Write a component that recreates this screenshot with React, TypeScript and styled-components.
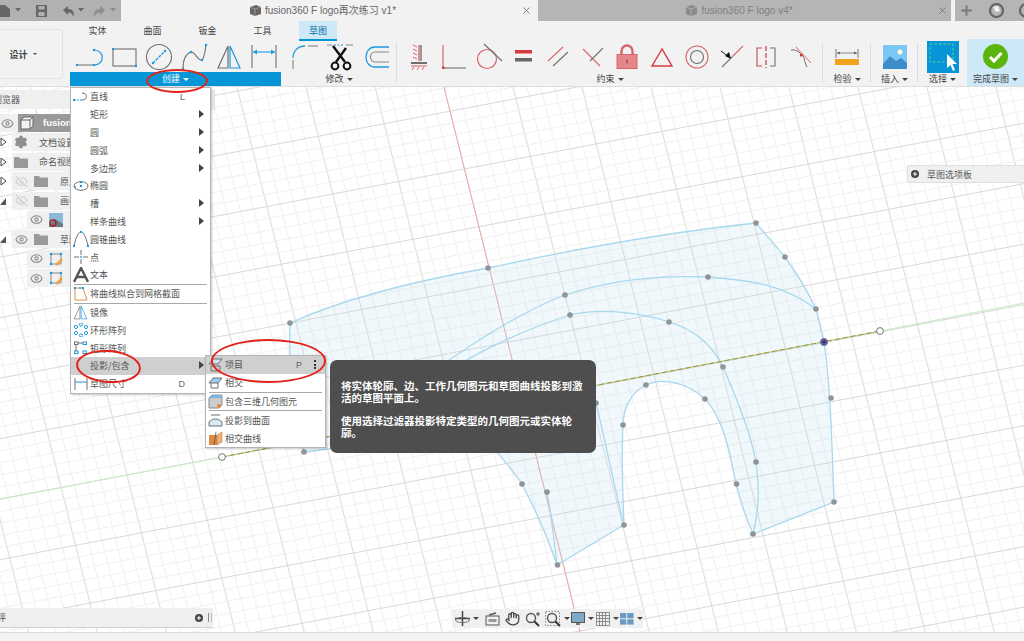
import React from "react";
import styled, { createGlobalStyle } from "styled-components";
import { Eye, EyeOff, Settings, Hand, Plus, X } from "lucide-react";

const Global = createGlobalStyle`
  html, body { margin: 0; padding: 0; background: #fff; }
  body { font-family: "Noto Sans CJK SC", "Liberation Sans", sans-serif; }
`;

const Page = styled.div`position: relative; width: 1024px; height: 641px; overflow: hidden; display: flex; flex-direction: column; background: #fff;`;

/* ---------- title bar ---------- */
const TitleBar = styled.div`height: 21px; flex: none; display: flex; background: #f2f2f2;`;
const QuickBar = styled.div`width: 121px; flex: none; background: #b1b1b1; display: flex; align-items: center; overflow: hidden;`;
const Tab = styled.div<{ $active?: boolean; $w: number }>`
  width: ${p => p.$w}px; flex: none; position: relative; display: flex; align-items: center; justify-content: center; gap: 3px;
  box-sizing: border-box; padding-right: 11px;
  background: ${p => (p.$active ? "#f2f2f2" : "#b5b5b5")};
  color: ${p => (p.$active ? "#666" : "#808080")};
  font: 10px/21px "Liberation Sans", "Noto Sans CJK SC", sans-serif;
  margin-right: ${p => (p.$active ? 3 : 0)}px;
`;
const TabClose = styled.span`position: absolute; right: 3px; top: 5px; color: #777; display: flex;`;
const WindowTools = styled.div`flex: 1; margin-left: 4px; background: #b5b5b5; display: flex; align-items: center; padding-left: 4px; gap: 15px; color: #777;`;
const Caret = styled.i<{ $c?: string; $s?: number }>`
  display: inline-block; flex: none; width: 0; height: 0; border-style: solid;
  border-width: ${p => p.$s ?? 3}px ${p => p.$s ?? 3}px 0; border-color: ${p => p.$c ?? "#444"} transparent transparent;
`;

/* ---------- ribbon ---------- */
const Ribbon = styled.div`height: 66px; flex: none; display: flex; background: #f2f2f2; border-bottom: 1px solid #dedede; box-sizing: border-box;`;
const DesignColumn = styled.div`width: 70px; flex: none; padding-top: 8px;`;
const DesignBox = styled.div`width: 63px; height: 50px; box-sizing: border-box; border: 1px solid #e3e3e3; border-left: 0; border-radius: 0 4px 4px 0; display: flex; align-items: center; justify-content: center; gap: 5px; font-size: 9px; font-weight: 700; color: #444; padding-right: 16px;`;
const RibbonMain = styled.div`flex: 1; display: flex; flex-direction: column; min-width: 0;`;
const RibbonTabs = styled.div`height: 20px; flex: none; display: flex; font-size: 9px; color: #444; line-height: 20px;`;
const RibbonTab = styled.div<{ $active?: boolean }>`
  width: ${p => (p.$active ? 38 : 55)}px; text-align: center; box-sizing: border-box;
  ${p => p.$active && "background:#cde8f6; border-bottom:2px solid #0696d7; margin-left:9px; color:#0a6e9f;"}
`;
const Groups = styled.div`flex: 1; display: flex; min-height: 0;`;
const Group = styled.div<{ $w: number; $active?: boolean; $sep?: boolean }>`
  width: ${p => p.$w}px; flex: none; display: flex; flex-direction: column; position: relative;
  ${p => p.$active && "background:#cde8f6; margin-top:-2px; padding-top:2px;"}
  ${p => p.$sep && `&::after{content:"";position:absolute;right:0;top:2px;bottom:4px;width:1px;background:#dcdcdc;}`}
`;
const GroupIcons = styled.div<{ $pad?: number }>`height: 31px; display: flex; padding-left: ${p => p.$pad ?? 0}px; justify-content: ${p => (p.$pad === undefined ? "center" : "flex-start")};`;
const Slot = styled.div<{ $w?: number }>`width: ${p => p.$w ?? 35}px; flex: none; display: flex; align-items: center; justify-content: center;`;
const GroupLabel = styled.div<{ $on?: boolean }>`
  height: 14px; display: flex; align-items: center; justify-content: center; gap: 3px; font-size: 9px; line-height: 14px;
  color: ${p => (p.$on ? "#fff" : "#444")}; background: ${p => (p.$on ? "#0696d7" : "transparent")}; white-space: nowrap;
`;

/* ---------- canvas ---------- */
const Canvas = styled.div`flex: 1; position: relative; overflow: hidden; background: #fff;`;
const Scene = styled.svg`position: absolute; inset: 0; width: 100%; height: 100%; display: block;`;
const StatusBar = styled.div`height: 9px; flex: none; background: #f2f2f2; border-top: 1px solid #dcdcdc; box-sizing: border-box;`;

/* ---------- browser ---------- */
const Browser = styled.div`position: absolute; left: 0; top: 3px; width: 72px; display: flex; flex-direction: column;`;
const BrowserHead = styled.div`height: 19px; background: #efefef; font-size: 9px; line-height: 19px; color: #555; margin-bottom: 5px; white-space: nowrap; direction: rtl; overflow: hidden; padding-right: 52px;`;
const BrowserRow = styled.div<{ $indent?: number }>`height: 18px; margin-bottom: 1.4px; margin-left: ${p => p.$indent ?? 12}px; background: #f0f0f0; display: flex; align-items: center; position: relative; font-size: 9px; color: #555; white-space: nowrap;`;
const Toggle = styled.svg`position: absolute; left: -12px; top: 4px; width: 7px; height: 10px;`;
const RowSlot = styled.div<{ $w?: number }>`width: ${p => p.$w ?? 18}px; flex: none; display: flex; align-items: center; justify-content: center; margin-right: ${p => (p.$w ? 0 : 2)}px; color: #8a8a8a;`;
const RowLabel = styled.span<{ $gap?: number }>`margin-left: ${p => p.$gap ?? 8}px;`;
const RootChip = styled.div`width: 53px; height: 18px; margin-left: 4px; background: #9a9a9a; color: #fff; font: 700 9.5px/18px "Liberation Sans", sans-serif; padding-left: 2px; box-sizing: border-box; overflow: hidden; display: flex; align-items: center; gap: 9px; svg{flex:none;}`;

/* ---------- menus ---------- */
const Menu = styled.div<{ $l: number; $t: number; $w: number }>`
  position: absolute; left: ${p => p.$l}px; top: ${p => p.$t}px; width: ${p => p.$w}px; box-sizing: border-box; background: #fff;
  border: 1px solid #b5b5b5; box-shadow: 1px 1px 2px rgba(0,0,0,.22); z-index: 3; font-size: 9px; color: #555;
`;
const MenuRow = styled.div<{ $hl?: boolean }>`
  height: 17.8px; display: flex; align-items: center; position: relative; white-space: nowrap; background: ${p => (p.$hl ? "#cfcfcf" : "transparent")};
`;
const MenuIcon = styled.div`width: 19px; flex: none; display: flex; align-items: center; justify-content: center;`;
const Shortcut = styled.span<{ $r: number }>`position: absolute; right: ${p => p.$r}px; font: 9px "Liberation Sans", sans-serif; color: #666;`;
const SubArrow = styled.i`position: absolute; right: 6px; top: 4.5px; width: 0; height: 0; border-style: solid; border-width: 4px 0 4px 5px; border-color: transparent transparent transparent #444;`;
const MenuRule = styled.div`height: 1px; background: #a9a9a9; margin: 0 3px; `;
const MenuGrip = styled.div`position: absolute; left: 211px; top: 3px; width: 3px; height: 20px; background: #eee; border-right: 1px solid #ddd; z-index: 2;`;
const Kebab = styled.span`position: absolute; right: 9px; top: 4px; display: flex; flex-direction: column; gap: 1.5px; i{display:block;width:2px;height:2px;background:#333;}`;
const Tip = styled.div`
  position: absolute; left: 330px; top: 273px; width: 266px; height: 93px; box-sizing: border-box; padding: 20px 10px 0 11px; border-radius: 7px; background: #4e4e4e; color: #fff;
  font-size: 10.5px; font-weight: 700; line-height: 11.5px; z-index: 3;
`;
const TipPara = styled.p`margin: 0 0 12px;`;
const Palette = styled.div`position: absolute; left: 907px; top: 78px; width: 117px; height: 18px; background: #f0f0f0; border: 1px solid #e0e0e0; border-right: 0; display: flex; align-items: center; gap: 8px; padding-left: 3px; box-sizing: border-box; font-size: 9px; color: #555;`;
const RoundPlus = styled.span`width: 8px; height: 8px; border-radius: 50%; background: #444; color: #fff; display: flex; align-items: center; justify-content: center;`;
const Comments = styled.div`position: absolute; left: 0; top: 521px; width: 213px; height: 20px; background: #efefef; border-bottom: 1px solid #d2d2d2; box-sizing: border-box; display: flex; align-items: center; font-size: 9px; color: #555;`;
const CommentsText = styled.span`flex: 1; margin-left: -3px;`;
const Grip = styled.span`width: 2px; height: 9px; margin: 0 1px 0 5px; border-left: 1px solid #888; border-right: 1px solid #bbb;`;
const NavBar = styled.div`position: absolute; left: 452px; top: 522px; height: 19px; width: 191px; background: #f0f0f0; display: flex; align-items: center; padding-left: 0;`;
const NavItem = styled.div<{ $w: number }>`width: ${p => p.$w}px; flex: none; display: flex; align-items: center; justify-content: center; gap: 3px;`;
const RedEllipse = styled.div<{ $l: number; $t: number; $w: number; $h: number; $r?: number }>`
  position: absolute; left: ${p => p.$l}px; top: ${p => p.$t}px; width: ${p => p.$w}px; height: ${p => p.$h}px; box-sizing: border-box;
  border: 2px solid #e2231a; border-radius: 50%; transform: rotate(${p => p.$r ?? 0}deg); z-index: 5; pointer-events: none;
`;

/* ---------- icon helpers ---------- */
const B = "#1c9ade", G = "#6f6f6f", R = "#d8656b";
const Ico: React.FC<{ w: number; h?: number; children: React.ReactNode }> = ({ w, h, children }) => (
  <svg width={w} height={h ?? w} viewBox={`0 0 ${w} ${h ?? w}`} fill="none">{children}</svg>
);
const Dot: React.FC<{ x: number; y: number; s?: number }> = ({ x, y, s = 2.2 }) => <rect x={x - s / 2} y={y - s / 2} width={s} height={s} fill={B} />;

const LineIcon = () => <Ico w={30} h={24}><path d="M3 20H20" stroke={G} strokeWidth="1" /><path d="M20 20C31 20 31 5 20 5" stroke={B} strokeWidth="1.2" /><Dot x={3} y={20} /><Dot x={20} y={20} /><Dot x={20} y={5} /></Ico>;
const RectIcon = () => <Ico w={28} h={22}><rect x="3" y="3" width="23" height="17" stroke={G} strokeWidth="1.1" /><Dot x={3} y={3} /><Dot x={26} y={20} /></Ico>;
const CircleIcon = () => <Ico w={28}><circle cx="14" cy="14" r="12.5" stroke={G} strokeWidth="1.1" /><path d="M8 20L20 8" stroke={B} strokeWidth="1.4" strokeDasharray="3 1" /><Dot x={8} y={20} /><Dot x={20} y={8} /></Ico>;
const SplineIcon = () => <Ico w={28}><path d="M3 26C3 14 8 10 11 9C16 9 17 18 22 17C25 14 25 7 26 2" stroke={G} strokeWidth="1.1" /><Dot x={3} y={26} /><Dot x={11} y={9} /><Dot x={22} y={17} /><Dot x={26} y={2} /></Ico>;
const MirrorIcon = (p: { s?: number }) => { const s = p.s ?? 1; return <Ico w={26 * s} h={26 * s}><g transform={`scale(${s})`}><path d="M12 2L2 24H12Z" stroke={G} strokeWidth="1.2" /><path d="M14 2L24 24H14Z" stroke={B} strokeWidth="1.2" /></g></Ico>; };
const DimIcon = () => <Ico w={28} h={25}><path d="M2 1V24M26 1V24" stroke={G} strokeWidth="1.1" /><path d="M3 8H25" stroke={B} strokeWidth="1.1" /><path d="M3 8L7 5.5V10.5ZM25 8L21 5.5V10.5Z" fill={B} /></Ico>;
const FilletIcon = () => <Ico w={28} h={26}><path d="M2 25V16" stroke="#999" strokeWidth="1.4" /><path d="M2 14C2 7 7 2 14 2" stroke={B} strokeWidth="1.3" /><path d="M17 2H27" stroke="#999" strokeWidth="1.4" /></Ico>;
const ScissorsIcon = () => <Ico w={28} h={28}><path d="M1 2H6M20 2H27" stroke="#888" /><path d="M8 2H18" stroke={B} strokeDasharray="2 1.5" /><path d="M7 3L19 19M20 5L10 19" stroke="#111" strokeWidth="2.4" /><circle cx="9" cy="23" r="3.4" stroke="#111" strokeWidth="2" /><circle cx="21" cy="23" r="3.4" stroke="#111" strokeWidth="2" /></Ico>;
const OffsetIcon = () => <Ico w={28} h={24}><path d="M27 2H13C1 2 1 22 13 22H27" stroke={B} strokeWidth="1.3" /><path d="M27 7H13C7 7 7 17 13 17H27" stroke="#888" strokeWidth="1.2" /></Ico>;
const FixIcon = () => <Ico w={18} h={26}><path d="M11 1V17" stroke={G} strokeWidth="1.4" /><path d="M9 1V17" stroke={R} strokeWidth="1.4" /><path d="M7 3L3 1M7 7L3 5M7 11L3 9M7 15L3 13" stroke={R} /><path d="M1 19H17" stroke={G} strokeWidth="2" /><path d="M1 22H17" stroke={R} strokeWidth="1" /><path d="M4 23L2 26M9 23L7 26M14 23L12 26" stroke={R} /></Ico>;
const CoincIcon = () => <Ico w={26} h={26}><path d="M2 1V24" stroke={R} strokeWidth="1.2" /><path d="M3 24H25" stroke={G} strokeWidth="1.1" /><rect x="1" y="22.5" width="2.5" height="2.5" fill="#d23a44" /></Ico>;
const TangentIcon = () => <Ico w={28}><circle cx="12" cy="16" r="9.5" stroke={R} strokeWidth="1.2" /><path d="M9 1L27 18" stroke={G} strokeWidth="1.1" /></Ico>;
const EqualIcon = () => <Ico w={17} h={13}><rect y="0" width="17" height="3.5" fill="#d33a3f" /><rect y="8" width="17" height="3.5" fill="#666" /></Ico>;
const ParallelIcon = () => <Ico w={22}><path d="M1 15L16 1" stroke={R} strokeWidth="1.1" /><path d="M6 20L21 6" stroke={G} strokeWidth="1.1" /></Ico>;
const PerpIcon = () => <Ico w={22}><path d="M1 3L18 20" stroke={R} strokeWidth="1.1" /><path d="M8 15L21 2" stroke={G} strokeWidth="1.1" /></Ico>;
const LockIcon = () => <Ico w={22} h={25}><path d="M5.5 11V7a5.5 5.5 0 0 1 11 0v4" stroke="#d8656b" strokeWidth="2.4" /><rect x="1" y="10.5" width="20" height="14" fill="#e5868a" stroke="#d8656b" /><rect x="10.4" y="15.5" width="1.2" height="4" fill="#a33" /></Ico>;
const TriIcon = () => <Ico w={24} h={20}><path d="M12 2L2 19H22Z" stroke="#d33a44" strokeWidth="1.4" /></Ico>;
const ConcIcon = () => <Ico w={24}><circle cx="12" cy="12" r="11" stroke={R} strokeWidth="1.1" /><circle cx="12" cy="12" r="6.5" stroke={G} strokeWidth="1.1" /></Ico>;
const MidIcon = () => <Ico w={24}><path d="M2 22L12 12" stroke={G} strokeWidth="1.1" /><path d="M12 12L23 1" stroke={R} strokeWidth="1.1" /><path d="M1 6L9 12" stroke="#222" /><path d="M11 14L5 11L9 7Z" fill="#111" /></Ico>;
const SymIcon = () => <Ico w={22} h={22}><path d="M7 2H2V20H7" stroke="#c9474d" strokeWidth="1.1" /><path d="M15 2H20V20H15" stroke={G} strokeWidth="1.1" /><path d="M11 0V22" stroke="#c9474d" strokeWidth="1.3" strokeDasharray="5 2" /></Ico>;
const CurvIcon = () => <Ico w={22} h={22}><path d="M1 4C7 3 12 8 14 12C15 15 15 18 17 21" stroke={G} /><path d="M6 1L21 17" stroke={R} /><rect x="10" y="8" width="2.4" height="2.4" fill="#c33" /></Ico>;
const RulerIcon = () => <Ico w={24} h={18}><path d="M1 1V10M23 1V10" stroke="#777" /><path d="M2 5H22" stroke="#888" /><path d="M2 5L5 3.5V6.5ZM22 5L19 3.5V6.5Z" fill="#666" /><rect y="11" width="24" height="6" fill="#f0a21a" /></Ico>;
const PictureIcon = () => <Ico w={24}><rect width="24" height="24" fill="#7cc6f5" /><circle cx="17" cy="7" r="2.5" fill="#fff7d8" /><path d="M0 19L7 11L13 16L18 13L24 18V24H0Z" fill="#3e8dc9" /></Ico>;
const SelectIcon = () => <Ico w={32}><rect width="32" height="32" fill="#0696d7" /><rect x="3" y="3" width="23" height="18" stroke="#5ad58c" strokeDasharray="2.5 2" /><path d="M20 13V27L23.5 24L26 30L28 29L25.5 23L30 23Z" fill="#fff" /></Ico>;
const FinishIcon = () => <Ico w={25}><circle cx="12.5" cy="12.5" r="12.5" fill="#5cb40f" /><path d="M7 13L11 17L18.5 9" stroke="#fff" strokeWidth="3" /></Ico>;

const Folder = () => <Ico w={14} h={12}><path d="M0 1H5L6 2.5H14V12H0Z" fill="#999" /></Ico>;
const GearIco = () => <Settings size={14} color="#8f8f8f" fill="#8f8f8f" strokeWidth={2} />;
const ImgChip = () => <Ico w={14}><rect width="14" height="14" fill="#8db9d8" /><path d="M0 12L6 6L14 11V14H0Z" fill="#6b7a86" /><circle cx="4" cy="10" r="3" stroke="#a52127" strokeWidth="1.4" /></Ico>;
const SketchChip = () => <Ico w={14}><path d="M2 2H12V12H2Z" stroke="#888" /><Dot x={2} y={2} /><Dot x={12} y={2} /><Dot x={2} y={12} /><path d="M7 13L13 7" stroke="#f0a030" strokeWidth="2.2" /></Ico>;
const BoxChip = () => <Ico w={14}><path d="M1 4L4 1H13V10L10 13H1Z" fill="#f2f2f2" stroke="#666" /><path d="M1 4H10V13M10 4L13 1" stroke="#666" /></Ico>;

const s = { c: "#444" };
const MLine = () => <Ico w={16} h={11}><path d="M1 9H9" stroke={B} strokeDasharray="2 1" /><path d="M9 9C15 9 15 2 9 2" stroke={G} /><Dot x={1} y={9} s={2} /></Ico>;
const MEllipse = () => <Ico w={16} h={10}><ellipse cx="8" cy="5" rx="7" ry="4.3" stroke={G} /><Dot x={8} y={1} s={2} /><Dot x={8} y={5} s={2} /><Dot x={2} y={6} s={1.6} /></Ico>;
const MConic = () => <Ico w={16}><path d="M1 15C3 5 6 1 8 1C10 1 13 5 15 15" stroke={G} /><Dot x={1} y={15} s={2} /><Dot x={8} y={1} s={2} /><Dot x={15} y={15} s={2} /></Ico>;
const MPoint = () => <Ico w={14}><path d="M7 0V5M7 9V14M0 7H5M9 7H14" stroke={G} /><Dot x={7} y={7} s={1.6} /></Ico>;
const MText = () => <Ico w={16}><path d="M1 15L8 1L15 15M4 10H12" stroke="#555" strokeWidth="2.4" /></Ico>;
const MFit = () => <Ico w={14}><path d="M1 1H9L13 13H1Z" stroke="#e09048" /><Dot x={1} y={1} s={2} /><Dot x={6} y={1} s={1.6} /><Dot x={9} y={1} s={2} /></Ico>;
const MRing = () => <Ico w={14}>{[[7, 1.5], [12, 4], [12, 10], [7, 12.5], [2, 10], [2, 4]].map(([x, y], i) => <circle key={i} cx={x} cy={y} r="1.6" fill="#fff" stroke={B} />)}</Ico>;
const MRectPat = () => <Ico w={14}><rect x="0.5" y="1" width="3.5" height="2.5" stroke={G} /><rect x="9" y="1" width="3.5" height="2.5" stroke={B} /><rect x="0.5" y="10" width="3.5" height="2.5" stroke={B} /><rect x="9" y="10" width="3.5" height="2.5" stroke={B} /><path d="M2 4V10M4 2H9" stroke={G} /></Ico>;
const MDim = () => <Ico w={14} h={12}><path d="M1 0V12M13 0V12" stroke={G} /><path d="M1 4H13" stroke={B} /></Ico>;
const SProject = () => <Ico w={15} h={14}><path d="M5 1H14L10 6H1Z" fill="#cfe5f3" stroke={G} /><path d="M3 8H12V13H3Z" stroke={G} /><path d="M5 8V6" stroke={B} /></Ico>;
const SInter = () => <Ico w={15} h={12}><path d="M5 1H14L10 6H1Z" fill="#9ed0ee" stroke={G} /><path d="M3 6V11H10V6" stroke={G} /></Ico>;
const SInclude = () => <Ico w={15}><path d="M1 4L4 1H14V11L11 14H1Z" fill="#ccc" stroke="#888" /><path d="M4 1H14V4H1Z" fill="#78b7de" /><circle cx="11" cy="12" r="2" fill="#e8873a" /></Ico>;
const SSurf = () => <Ico w={15} h={13}><path d="M3 1H12" stroke={G} /><path d="M1 8C5 4 10 4 14 8V12H1Z" fill="#d6e9f5" stroke={G} /></Ico>;
const SCurve = () => <Ico w={15}><path d="M1 4H9V14H1Z" fill="#e08a45" /><path d="M9 4L14 1V11L9 14Z" fill="#efb27c" stroke="#b56a2a" strokeWidth=".5" /><path d="M8 1L6 14" stroke="#333" strokeWidth=".6" /></Ico>;

/* ---------- canvas drawing ---------- */
const gridB = () => {
  const out: React.ReactElement[] = [];
  for (let i = -50; i < 60; i++) {
    const top = 444 + i * 13.8;
    out.push(<line key={`b${i}`} x1={top} y1={87} x2={top + 0.25 * 545} y2={632} stroke={i % 5 === 0 ? "#d9d9d9" : "#f0f0f0"} strokeWidth="1" />);
  }
  return out;
};
const gridA = () => {
  const out: React.ReactElement[] = [];
  for (let i = -40; i < 30; i++) {
    const y0 = 499.2 + i * 12.1;
    out.push(<line key={`a${i}`} x1={0} y1={y0} x2={1024} y2={y0 - 0.19 * 1024} stroke={i % 5 === 0 ? "#d9d9d9" : "#f0f0f0"} strokeWidth="1" />);
  }
  return out;
};
const nodes = [[756, 223], [785, 257], [816, 309], [831, 398], [834, 502], [753, 534], [736.5, 484], [756, 462], [705, 399], [723, 367], [669, 322], [570, 315], [565, 295], [708, 277], [488, 268], [290, 323], [646, 385], [623, 425], [624, 525], [557.5, 565], [547, 492], [522, 484], [596, 403], [304, 452]];
const outline = "M290 323C350 296 420 280 488 268C580 248 670 232 756 223L785 257Q805 285 816 309L824 342C830 380 832 440 834 502L753 534C745 515 740 500 736 484C728 440 720 415 705 399C690 385 665 376 646 385C630 393 623 410 623 425C621 460 623 500 624 525L557 565C545 530 535 510 522 484C505 460 490 445 480 430L304 452C295 420 288 380 290 323Z";

const SceneArt = () => (
  <Scene viewBox="0 87 1024 545">
    {gridB()}
    {gridA()}
    <line x1={444} y1={87} x2={580} y2={632} stroke="#f5a6a6" strokeWidth="1" />
    <path d={outline} fill="#bcdff2" fillOpacity=".22" stroke="#a9d8ee" strokeWidth="1.3" />
    <g stroke="#a9d8ee" strokeWidth="1.3" fill="none">
      <path d="M816 309C785 285 750 280 708 277C660 275 610 280 565 295C520 312 470 345 420 380" />
      <path d="M723 367C710 340 690 328 669 322C640 312 600 308 570 315C530 328 490 345 450 370" />
      <path d="M723 367C735 395 750 430 756 462C760 490 758 515 753 534" />
      <path d="M596 403C605 440 615 490 624 525" />
      <path d="M547 492C552 520 555 545 557 565" />
    </g>
    <line x1={0} y1={499} x2={222} y2={457} stroke="#c4ecc0" strokeWidth="1" />
    <line x1={880} y1={331} x2={1024} y2={303} stroke="#c4ecc0" strokeWidth="1" />
    <line x1={222} y1={457} x2={880} y2={331} stroke="#9ad17f" strokeWidth="1" />
    <line x1={222} y1={457} x2={880} y2={331} stroke="#b88a3a" strokeWidth="1" strokeDasharray="5 3" />
    {nodes.map(([x, y], i) => <circle key={i} cx={x} cy={y} r="2.8" fill="#8d9599" />)}
    <circle cx={824} cy={342} r="3.6" fill="#5b4ea3" stroke="#7b7b95" />
    <circle cx={824} cy={342} r="1" fill="#222" />
    <circle cx={880} cy={331} r="3.4" fill="#fff" stroke="#777" />
    <circle cx={222} cy={457} r="3.4" fill="#fff" stroke="#777" />
  </Scene>
);

const Row: React.FC<{ icon?: React.ReactNode; label: string; arrow?: boolean; key2?: string; hl?: boolean }> = ({ icon, label, arrow, key2, hl }) => (
  <MenuRow $hl={hl}>
    <MenuIcon>{icon}</MenuIcon>
    <span>{label}</span>
    {key2 && <Shortcut $r={25}>{key2}</Shortcut>}
    {arrow && <SubArrow />}
  </MenuRow>
);

export default function App() {
  return (
    <Page>
      <Global />
      <TitleBar>
        <QuickBar>
          <Ico w={121} h={21}>
            <path d="M-4 5H5L10 9V17H-4Z" fill="#666" />
            <path d="M15 8H21L18 11.5Z" fill="#666" />
            <path d="M36 5H47V17H36Z" fill="#666" /><rect x="38.5" y="6" width="6" height="3.5" fill="#b1b1b1" /><rect x="38.5" y="12" width="6" height="4" fill="#b1b1b1" />
            <path d="M63 10L68 6V9C73 9 74.5 12 73.5 17C72 13.5 71 12.5 68 12.5V15Z" fill="#666" />
            <path d="M78 8H84L81 11.5Z" fill="#666" />
            <path d="M105 10L100 6V9C95 9 93.5 12 94.5 17C96 13.5 97 12.5 100 12.5V15Z" fill="#8d8d8d" />
            <path d="M110 8H116L113 11.5Z" fill="#8d8d8d" />
          </Ico>
        </QuickBar>
        <Tab $active $w={414}>
          <Ico w={13}><path d="M1 3L7 1L12 3V10L6 12L1 10Z" fill="#666" /><path d="M1 3L6 5L12 3M6 5V12" stroke="#aaa" strokeWidth=".7" /></Ico>
          fusion360 F logo再次练习 v1*
          <TabClose><X size={11} strokeWidth={2} /></TabClose>
        </Tab>
        <Tab $w={413}>
          <Ico w={13}><path d="M1 3L7 1L12 3V10L6 12L1 10Z" fill="#8a8a8a" /><path d="M1 3L6 5L12 3M6 5V12" stroke="#bbb" strokeWidth=".7" /></Ico>
          fusion360 F logo v4*
          <TabClose><X size={11} strokeWidth={2} /></TabClose>
        </Tab>
        <WindowTools>
          <Plus size={15} strokeWidth={3} />
          <Ico w={15}><circle cx="7.5" cy="7.5" r="6.5" stroke="#666" strokeWidth="2.2" /><path d="M4 4L9 3L11 8L7 9Z" fill="#f2f2f2" /></Ico>
          <Ico w={15}><circle cx="7.5" cy="7.5" r="6.5" stroke="#666" strokeWidth="2.2" /><path d="M7.5 4V8H11" stroke="#666" strokeWidth="1.4" /></Ico>
        </WindowTools>
      </TitleBar>

      <Ribbon>
        <DesignColumn>
          <DesignBox>设计 <Caret $s={2.5} /></DesignBox>
        </DesignColumn>
        <RibbonMain>
          <RibbonTabs>
            <RibbonTab>实体</RibbonTab>
            <RibbonTab>曲面</RibbonTab>
            <RibbonTab>钣金</RibbonTab>
            <RibbonTab>工具</RibbonTab>
            <RibbonTab $active>草图</RibbonTab>
          </RibbonTabs>
          <Groups>
            <Group $w={211}>
              <GroupIcons $pad={1}>
                <Slot><LineIcon /></Slot><Slot><RectIcon /></Slot><Slot><CircleIcon /></Slot><Slot><SplineIcon /></Slot><Slot><MirrorIcon /></Slot><Slot><DimIcon /></Slot>
              </GroupIcons>
              <GroupLabel $on>创建 <Caret $c="#fff" /></GroupLabel>
            </Group>
            <Group $w={116} $sep>
              <GroupIcons $pad={6}>
                <Slot $w={35.5}><FilletIcon /></Slot><Slot $w={35.5}><ScissorsIcon /></Slot><Slot $w={35.5}><OffsetIcon /></Slot>
              </GroupIcons>
              <GroupLabel>修改 <Caret /></GroupLabel>
            </Group>
            <Group $w={426} $sep>
              <GroupIcons $pad={5}>
                {[FixIcon, CoincIcon, TangentIcon, EqualIcon, ParallelIcon, PerpIcon, LockIcon, TriIcon, ConcIcon, MidIcon, SymIcon, CurvIcon].map((I, i) => <Slot key={i} $w={34.7}><I /></Slot>)}
              </GroupIcons>
              <GroupLabel>约束 <Caret /></GroupLabel>
            </Group>
            <Group $w={48} $sep><GroupIcons><Slot><RulerIcon /></Slot></GroupIcons><GroupLabel>检验 <Caret /></GroupLabel></Group>
            <Group $w={47} $sep><GroupIcons><Slot><PictureIcon /></Slot></GroupIcons><GroupLabel>插入 <Caret /></GroupLabel></Group>
            <Group $w={49}><GroupIcons><Slot><SelectIcon /></Slot></GroupIcons><GroupLabel>选择 <Caret /></GroupLabel></Group>
            <Group $w={57} $active><GroupIcons><Slot><FinishIcon /></Slot></GroupIcons><GroupLabel>完成草图 <Caret /></GroupLabel></Group>
          </Groups>
        </RibbonMain>
      </Ribbon>

      <Canvas>
        <SceneArt />

        <Browser>
          <BrowserHead>浏览器</BrowserHead>
          <BrowserRow $indent={0}>
            <RowSlot $w={14}><Eye size={13} /></RowSlot>
            <RootChip><BoxChip />fusion360</RootChip>
          </BrowserRow>
          <BrowserRow><Toggle viewBox="0 0 7 10"><path d="M1 1L6 5L1 9Z" fill="#fff" stroke="#444" /></Toggle><RowSlot><GearIco /></RowSlot><RowLabel $gap={7}>文档设置</RowLabel></BrowserRow>
          <BrowserRow><Toggle viewBox="0 0 7 10"><path d="M1 1L6 5L1 9Z" fill="#fff" stroke="#444" /></Toggle><RowSlot><Folder /></RowSlot><RowLabel $gap={7}>命名视图</RowLabel></BrowserRow>
          <BrowserRow><Toggle viewBox="0 0 7 10"><path d="M1 1L6 5L1 9Z" fill="#fff" stroke="#444" /></Toggle><RowSlot><EyeOff size={13} color="#ccc" /></RowSlot><RowSlot><Folder /></RowSlot><RowLabel>原点</RowLabel></BrowserRow>
          <BrowserRow><Toggle viewBox="0 0 7 10"><path d="M6 2V9H0Z" fill="#555" /></Toggle><RowSlot><EyeOff size={13} color="#ccc" /></RowSlot><RowSlot><Folder /></RowSlot><RowLabel>画布</RowLabel></BrowserRow>
          <BrowserRow $indent={27}><RowSlot><Eye size={13} /></RowSlot><RowSlot><ImgChip /></RowSlot></BrowserRow>
          <BrowserRow><Toggle viewBox="0 0 7 10"><path d="M6 2V9H0Z" fill="#555" /></Toggle><RowSlot><Eye size={13} /></RowSlot><RowSlot><Folder /></RowSlot><RowLabel>草图</RowLabel></BrowserRow>
          <BrowserRow $indent={27}><RowSlot><Eye size={13} /></RowSlot><RowSlot><SketchChip /></RowSlot></BrowserRow>
          <BrowserRow $indent={27}><RowSlot><Eye size={13} /></RowSlot><RowSlot><SketchChip /></RowSlot></BrowserRow>
        </Browser>

        <MenuGrip />
        <Menu $l={70} $t={0} $w={141}>
          <Row icon={<MLine />} label="直线" key2="L" />
          <Row label="矩形" arrow />
          <Row label="圆" arrow />
          <Row label="圆弧" arrow />
          <Row label="多边形" arrow />
          <Row icon={<MEllipse />} label="椭圆" />
          <Row label="槽" arrow />
          <Row label="样条曲线" arrow />
          <Row icon={<MConic />} label="圆锥曲线" />
          <Row icon={<MPoint />} label="点" />
          <Row icon={<MText />} label="文本" />
          <MenuRule />
          <Row icon={<MFit />} label="将曲线拟合到网格截面" />
          <MenuRule />
          <Row icon={<MirrorIcon s={0.58} />} label="镜像" />
          <Row icon={<MRing />} label="环形阵列" />
          <Row icon={<MRectPat />} label="矩形阵列" />
          <Row label="投影/包含" arrow hl />
          <Row icon={<MDim />} label="草图尺寸" key2="D" />
        </Menu>

        <Menu $l={205} $t={268} $w={121}>
          <MenuRow $hl><MenuIcon><SProject /></MenuIcon><span>项目</span><Shortcut $r={23}>P</Shortcut><Kebab><i /><i /><i /></Kebab></MenuRow>
          <Row icon={<SInter />} label="相交" />
          <MenuRule />
          <Row icon={<SInclude />} label="包含三维几何图元" />
          <MenuRule />
          <Row icon={<SSurf />} label="投影到曲面" />
          <Row icon={<SCurve />} label="相交曲线" />
        </Menu>

        <Tip>
          <TipPara>将实体轮廓、边、工作几何图元和草图曲线投影到激活的草图平面上。</TipPara>
          <TipPara>使用选择过滤器投影特定类型的几何图元或实体轮廓。</TipPara>
        </Tip>

        <Palette><RoundPlus><Plus size={6} strokeWidth={4} /></RoundPlus>草图选项板</Palette>

        <Comments>
          <CommentsText>评</CommentsText>
          <RoundPlus><Plus size={6} strokeWidth={4} /></RoundPlus>
          <Grip />
        </Comments>

        <NavBar>
          <NavItem $w={30}><Ico w={15}><path d="M7.5 0V15M0 7.5H15" stroke={s.c} strokeWidth="1.5" /><ellipse cx="7.5" cy="9" rx="7" ry="2.6" stroke="#777" /></Ico><Caret /></NavItem>
          <NavItem $w={20}><Ico w={15} h={14}><rect x="1" y="4" width="13" height="9" stroke="#555" /><rect x="3.5" y="7" width="8" height="3" fill="#999" /><path d="M4 3L11 1" stroke="#555" strokeWidth="1.4" /></Ico></NavItem>
          <NavItem $w={20}><Hand size={15} color="#444" /></NavItem>
          <NavItem $w={22}><Ico w={16}><circle cx="6" cy="7" r="4.5" stroke="#555" strokeWidth="1.4" /><path d="M9.5 10.5L14 15" stroke="#333" strokeWidth="2" /><path d="M13 1V5M11 3H15" stroke="#444" /></Ico></NavItem>
          <NavItem $w={26}><Ico w={16}><rect x=".5" y=".5" width="14" height="14" stroke="#888" strokeDasharray="1.5 1.5" /><circle cx="7" cy="7" r="4.5" stroke="#555" strokeWidth="1.4" /><path d="M10.5 10.5L15 15" stroke="#333" strokeWidth="2" /></Ico><Caret /></NavItem>
          <NavItem $w={25}><Ico w={14}><rect x=".5" y=".5" width="13" height="10" fill="#7fa9c9" stroke="#555" /><path d="M5 11V13H9V11" fill="#777" /></Ico><Caret /></NavItem>
          <NavItem $w={25}><Ico w={14}><path d="M.5.5H13.5V13.5H.5ZM3.5 0V14M6.5 0V14M9.5 0V14M0 3.5H14M0 6.5H14M0 9.5H14" stroke="#777" strokeWidth=".8" /></Ico><Caret /></NavItem>
          <NavItem $w={23}><Ico w={14} h={12}><rect y="0" width="6.3" height="5.3" fill="#6a9ac3" /><rect x="7.3" y="0" width="6.3" height="5.3" fill="#6a9ac3" /><rect y="6.3" width="6.3" height="5.3" fill="#6a9ac3" /><rect x="7.3" y="6.3" width="6.3" height="5.3" fill="#6a9ac3" /></Ico><Caret /></NavItem>
        </NavBar>
      </Canvas>
      <StatusBar />

      <RedEllipse $l={146} $t={69} $w={62} $h={24} />
      <RedEllipse $l={76} $t={350} $w={65} $h={33} $r={4} />
      <RedEllipse $l={211} $t={339} $w={115} $h={44} />
    </Page>
  );
}
